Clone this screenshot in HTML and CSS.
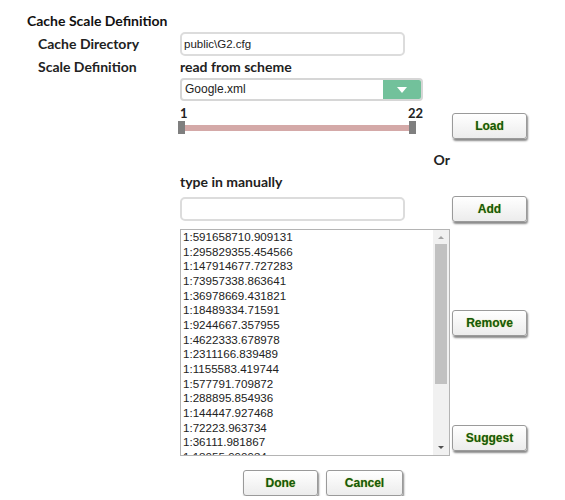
FILE: index.html
```html
<!DOCTYPE html>
<html lang="en">

<head>
    <meta charset="UTF-8">
    <meta name="viewport" content="width=device-width, initial-scale=1.0">
    <title>Cache Scale Definition</title>
    <link rel="stylesheet" href="styles.css">
</head>

<body>
    <div class="dialogo">
        <div class="titulo">Cache Scale Definition</div>

        <div class="fila fila-dir">
            <div class="etiqueta">Cache Directory</div>
            <div class="campo">
                <input class="texto" type="text" value="public\G2.cfg">
            </div>
        </div>

        <div class="fila fila-escala">
            <div class="etiqueta">Scale Definition</div>
            <div class="campo">
                <div class="subtitulo">read from scheme</div>
                <div class="selector">
                    <span class="selector-valor">Google.xml</span>
                    <span class="selector-boton"><span class="flecha"></span></span>
                </div>
            </div>
        </div>

        <div class="fila fila-rango">
            <div class="etiqueta"></div>
            <div class="campo">
                <div class="rango-numeros">
                    <span>1</span>
                    <span>22</span>
                </div>
                <div class="rango">
                    <div class="rango-pista"></div>
                    <div class="rango-mango izq"></div>
                    <div class="rango-mango der"></div>
                </div>
            </div>
            <div class="lateral">
                <div class="boton">Load</div>
            </div>
        </div>

        <div class="fila fila-or">
            <div class="etiqueta"></div>
            <div class="campo o">Or</div>
        </div>

        <div class="fila fila-manual">
            <div class="etiqueta"></div>
            <div class="campo">
                <div class="subtitulo">type in manually</div>
            </div>
        </div>

        <div class="fila fila-agregar">
            <div class="etiqueta"></div>
            <div class="campo">
                <input class="texto" type="text" value="">
            </div>
            <div class="lateral">
                <div class="boton">Add</div>
            </div>
        </div>

        <div class="fila fila-lista">
            <div class="etiqueta"></div>
            <div class="lista">
                <div class="lista-items">
                    <div>1:591658710.909131</div>
                    <div>1:295829355.454566</div>
                    <div>1:147914677.727283</div>
                    <div>1:73957338.863641</div>
                    <div>1:36978669.431821</div>
                    <div>1:18489334.71591</div>
                    <div>1:9244667.357955</div>
                    <div>1:4622333.678978</div>
                    <div>1:2311166.839489</div>
                    <div>1:1155583.419744</div>
                    <div>1:577791.709872</div>
                    <div>1:288895.854936</div>
                    <div>1:144447.927468</div>
                    <div>1:72223.963734</div>
                    <div>1:36111.981867</div>
                    <div>1:18055.990934</div>
                </div>
                <div class="barra">
                    <div class="barra-flecha arriba"></div>
                    <div class="barra-pulgar"></div>
                    <div class="barra-flecha abajo"></div>
                </div>
            </div>
            <div class="lateral lateral-lista">
                <div class="boton">Remove</div>
                <div class="boton">Suggest</div>
            </div>
        </div>

        <div class="acciones">
            <div class="boton">Done</div>
            <div class="boton ancho">Cancel</div>
        </div>
    </div>
</body>

</html>
```

FILE: styles.css
```css
body {
    margin: 0;
    background-color: white;
    font-family: "Liberation Sans", Arial, sans-serif;
    font-size: 12px;
    color: #222;
}

.dialogo {
    width: 565px;
    padding-top: 12px;
}

.titulo {
    font-family: Lato, "Open Sans", sans-serif;
    font-weight: bold;
    font-size: 14px;
    color: #111;
    padding-left: 27px;
    height: 17px;
}

.fila {
    display: flex;
    align-items: flex-start;
}

.etiqueta {
    width: 142px;
    padding-left: 38px;
    font-family: Lato, "Open Sans", sans-serif;
    font-weight: bold;
    font-size: 14px;
    color: #222;
}

.campo {
    width: 270px;
}

.lateral {
    margin-left: 2px;
}

.subtitulo {
    font-family: Lato, "Open Sans", sans-serif;
    font-weight: bold;
    font-size: 14px;
    color: #222;
}

/* campos de texto */
.texto {
    box-sizing: border-box;
    width: 225px;
    height: 24px;
    border: 2px solid #dcdcdc;
    border-radius: 5px;
    padding: 0 2px;
    margin: 0;
    font-family: "Liberation Sans", Arial, sans-serif;
    font-size: 11.5px;
    color: #222;
    background-color: white;
    outline: none;
}

.fila-dir {
    margin-top: 3px;
}

.fila-dir .etiqueta {
    padding-top: 3px;
}

.fila-escala {
    margin-top: 2px;
}

.fila-escala .subtitulo {
    height: 20px;
}

/* selector */
.selector {
    box-sizing: border-box;
    width: 243px;
    height: 23px;
    border: 2px solid #d6d6d6;
    border-radius: 4px;
    display: flex;
    align-items: stretch;
    overflow: hidden;
}

.selector-valor {
    flex: 1;
    padding-left: 3px;
    line-height: 19px;
    font-size: 12px;
}

.selector-boton {
    width: 38px;
    background-color: #72c19b;
    display: flex;
    justify-content: center;
    align-items: center;
}

.flecha {
    width: 0;
    height: 0;
    border-left: 5px solid transparent;
    border-right: 5px solid transparent;
    border-top: 6px solid white;
}

/* rango */
.fila-rango {
    margin-top: 4px;
}

.rango-numeros {
    width: 243px;
    display: flex;
    justify-content: space-between;
    font-family: Lato, "Open Sans", sans-serif;
    font-weight: bold;
    font-size: 13px;
    height: 16px;
}

.rango {
    position: relative;
    width: 240px;
    height: 14px;
}

.rango-pista {
    position: absolute;
    left: 2px;
    right: 4px;
    top: 4px;
    height: 6px;
    background-color: #d4a9a8;
}

.rango-mango {
    position: absolute;
    top: 0;
    width: 7px;
    height: 13px;
    background-color: #7f7f7f;
}

.rango-mango.izq {
    left: -2px;
}

.rango-mango.der {
    left: 229px;
}

.fila-rango .lateral {
    padding-top: 8px;
}

/* botones */
.boton {
    box-sizing: border-box;
    width: 75px;
    height: 26px;
    border: 1px solid #9a9a9a;
    border-radius: 3px;
    background: linear-gradient(#ffffff, #ececec);
    box-shadow: 1px 2px 2px #8a8a8a;
    display: flex;
    justify-content: center;
    align-items: center;
    font-weight: bold;
    font-size: 12px;
    color: #125a10;
    text-shadow: 0 0 1px #c9c23a;
}

.boton.ancho {
    width: 77px;
}

.fila-or {
    margin-top: 12px;
}

.o {
    text-align: right;
    font-family: Lato, "Open Sans", sans-serif;
    font-weight: bold;
    font-size: 14px;
    height: 18px;
}

.fila-manual {
    margin-top: 4px;
}

.fila-manual .subtitulo {
    height: 18px;
}

.fila-agregar {
    margin-top: 5px;
}

.fila-agregar .campo {
    padding-top: 1px;
}

/* lista */
.fila-lista {
    margin-top: 7px;
}

.lista {
    box-sizing: border-box;
    width: 270px;
    height: 227px;
    border: 1px solid #b4b4b4;
    display: flex;
    overflow: hidden;
}

.lista-items {
    flex: 1;
    padding: 0 0 0 2px;
    line-height: 14.65px;
    font-size: 11.6px;
    color: #222;
    overflow: hidden;
}

.barra {
    width: 16px;
    background-color: #f1f1f1;
    display: flex;
    flex-direction: column;
    align-items: center;
}

.barra-flecha {
    width: 0;
    height: 0;
    border-left: 3px solid transparent;
    border-right: 3px solid transparent;
    margin: 6px 0;
}

.barra-flecha.arriba {
    border-bottom: 3px solid #a3a3a3;
}

.barra-flecha.abajo {
    border-top: 3px solid #505050;
    margin-top: auto;
}

.barra-pulgar {
    width: 12px;
    height: 140px;
    background-color: #c1c1c1;
    margin-top: -1px;
}

.lateral-lista {
    display: flex;
    flex-direction: column;
    gap: 89px;
    padding-top: 81px;
}

/* acciones */
.acciones {
    display: flex;
    gap: 8px;
    margin-top: 14px;
    padding-left: 243px;
}
```
